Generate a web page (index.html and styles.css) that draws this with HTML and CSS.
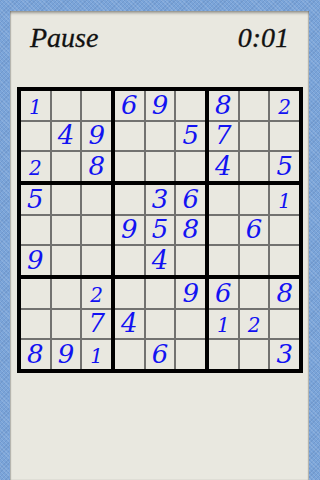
FILE: index.html
```html
<!DOCTYPE html>
<html>
<head>
<meta charset="utf-8">
<link rel="stylesheet" href="styles.css">
</head>
<body>
<div class="frame">
  <div class="paper">
    <div class="header">
      <span class="title">Pause</span>
      <span class="timer">0:01</span>
    </div>
    <div class="board">
      <div class="block">
        <div class="cell"><span class="s">1</span></div><div class="cell"></div><div class="cell"></div>
        <div class="cell"></div><div class="cell">4</div><div class="cell">9</div>
        <div class="cell"><span class="s">2</span></div><div class="cell"></div><div class="cell">8</div>
      </div>
      <div class="block">
        <div class="cell">6</div><div class="cell">9</div><div class="cell"></div>
        <div class="cell"></div><div class="cell"></div><div class="cell">5</div>
        <div class="cell"></div><div class="cell"></div><div class="cell"></div>
      </div>
      <div class="block">
        <div class="cell">8</div><div class="cell"></div><div class="cell"><span class="s">2</span></div>
        <div class="cell">7</div><div class="cell"></div><div class="cell"></div>
        <div class="cell">4</div><div class="cell"></div><div class="cell">5</div>
      </div>
      <div class="block">
        <div class="cell">5</div><div class="cell"></div><div class="cell"></div>
        <div class="cell"></div><div class="cell"></div><div class="cell"></div>
        <div class="cell">9</div><div class="cell"></div><div class="cell"></div>
      </div>
      <div class="block">
        <div class="cell"></div><div class="cell">3</div><div class="cell">6</div>
        <div class="cell">9</div><div class="cell">5</div><div class="cell">8</div>
        <div class="cell"></div><div class="cell">4</div><div class="cell"></div>
      </div>
      <div class="block">
        <div class="cell"></div><div class="cell"></div><div class="cell"><span class="s">1</span></div>
        <div class="cell"></div><div class="cell">6</div><div class="cell"></div>
        <div class="cell"></div><div class="cell"></div><div class="cell"></div>
      </div>
      <div class="block">
        <div class="cell"></div><div class="cell"></div><div class="cell"><span class="s">2</span></div>
        <div class="cell"></div><div class="cell"></div><div class="cell">7</div>
        <div class="cell">8</div><div class="cell">9</div><div class="cell"><span class="s">1</span></div>
      </div>
      <div class="block">
        <div class="cell"></div><div class="cell"></div><div class="cell">9</div>
        <div class="cell">4</div><div class="cell"></div><div class="cell"></div>
        <div class="cell"></div><div class="cell">6</div><div class="cell"></div>
      </div>
      <div class="block">
        <div class="cell">6</div><div class="cell"></div><div class="cell">8</div>
        <div class="cell"><span class="s">1</span></div><div class="cell"><span class="s">2</span></div><div class="cell"></div>
        <div class="cell"></div><div class="cell"></div><div class="cell">3</div>
      </div>
    </div>
  </div>
</div>
</body>
</html>
```
FILE: styles.css
```css
html, body {
  margin: 0;
  padding: 0;
}
body {
  width: 320px;
  height: 480px;
  overflow: hidden;
  background: #7aa4d9;
  background-image:
    repeating-linear-gradient(45deg, rgba(255,255,255,0.12) 0 1px, transparent 1px 3px),
    repeating-linear-gradient(-45deg, rgba(40,70,120,0.12) 0 1px, transparent 1px 3px);
}
.frame {
  padding: 11px 11px 0 10px;
  height: 469px;
}
.paper {
  height: 469px;
  background: #e9e8e0;
  box-shadow: inset 0 3px 3px -1px rgba(0,0,0,0.35), inset 1px 0 1px rgba(0,0,0,0.2), inset -1px 0 1px rgba(0,0,0,0.2);
  display: flex;
  flex-direction: column;
}
.header {
  height: 76px;
  box-sizing: border-box;
  padding: 11px 20px 0 20px;
  display: flex;
  justify-content: space-between;
  align-items: flex-start;
  font-family: "Liberation Serif", serif;
  font-style: italic;
  font-size: 28px;
  color: #111;
  -webkit-text-stroke: 0.3px #111;
}
.board {
  margin-left: 7px;
  width: 286px;
  height: 286px;
  box-sizing: border-box;
  border: 4px solid #000;
  background: #000;
  display: grid;
  grid-template-columns: repeat(3, 1fr);
  grid-template-rows: repeat(3, 1fr);
  gap: 4px;
}
.block {
  display: grid;
  grid-template-columns: repeat(3, 1fr);
  grid-template-rows: repeat(3, 1fr);
  gap: 2px;
  background: #727270;
}
.cell {
  background: #e9e8e0;
  display: flex;
  justify-content: center;
  align-items: flex-end;
  font-family: "DejaVu Serif", serif;
  font-style: italic;
  font-size: 26px;
  line-height: 1;
  color: #1212f2;
  padding-bottom: 2px;
  box-sizing: border-box;
  overflow: hidden;
}
.s {
  font-size: 20px;
  padding-bottom: 1px;
}
```
